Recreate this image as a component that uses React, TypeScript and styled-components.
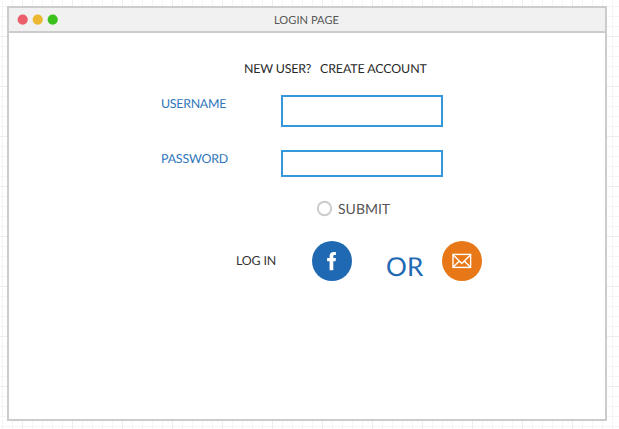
import React from "react";
import styled, { createGlobalStyle } from "styled-components";

const GlobalStyle = createGlobalStyle`
  * { box-sizing: border-box; }
  body {
    margin: 0;
    background: #fff;
    font-family: Lato, sans-serif;
    text-rendering: geometricPrecision;
    overflow: hidden;
  }
`;

const Canvas = styled.main`
  width: 619px;
  height: 429px;
  padding: 6px 0 0 7px;
  background-image:
    linear-gradient(90deg, #ededed 1px, transparent 1px),
    linear-gradient(#ededed 1px, transparent 1px),
    linear-gradient(90deg, #f5f5f5 1px, transparent 1px),
    linear-gradient(#f5f5f5 1px, transparent 1px);
  background-size: 50px 50px, 50px 50px, 10px 10px, 10px 10px;
  background-position: 22px 0, 0 36px, 2px 0, 0 6px;
`;

const Window = styled.section`
  width: 600px;
  height: 415px;
  border: 2px solid #ccc;
  background: #fff;
`;

const TitleBar = styled.header`
  display: grid;
  grid-template-columns: 1fr auto 1fr;
  align-items: center;
  height: 25px;
  padding-left: 8px;
  padding-right: 9px;
  background: #f1f1f1;
  border-bottom: 2px solid #ccc;
`;

const Controls = styled.svg`
  display: block;
`;

const Text = styled.span<{
  $size: number;
  $color: string;
  $width: number;
  $spacing?: number;
}>`
  display: block;
  width: ${(p) => p.$width}px;
  font-size: ${(p) => p.$size}px;
  letter-spacing: ${(p) => p.$spacing ?? 0}px;
  line-height: 1.2;
  color: ${(p) => p.$color};
  white-space: pre;
`;

const TitleText = styled(Text)`
  padding-top: 2px;
`;

const Form = styled.form`
  display: flex;
  flex-direction: column;
`;

const Intro = styled.div`
  display: flex;
  gap: 9px;
  padding: 29px 0 0 235px;
  height: 62px;
`;

const Field = styled.label<{ $height: number }>`
  display: grid;
  grid-template-columns: 120px 162px;
  align-items: start;
  height: ${(p) => p.$height}px;
  padding-left: 152px;
`;

const Input = styled.input<{ $height: number }>`
  width: 162px;
  height: ${(p) => p.$height}px;
  border: 2px solid #3498db;
  border-radius: 0;
  background: #fff;
  outline: none;
`;

const Submit = styled.div`
  display: flex;
  align-items: center;
  gap: 5px;
  height: 17px;
  margin-left: 307px;
`;

const SubmitText = styled(Text)`
  padding-top: 1px;
`;

const LoginRow = styled.div`
  display: grid;
  grid-template-columns: 75px 75px 55px 41px;
  align-items: center;
  height: 41px;
  margin: 21px 0 0 227px;
`;

const Round = styled.svg`
  display: block;
  width: 41px;
  height: 41px;
`;

const OrText = styled(Text)`
  padding-top: 13px;
`;

const LabelText = styled(Text)`
  padding-top: 2px;
`;

const LoginText = styled(Text)`
  padding-top: 2px;
`;

export default function App() {
  return (
    <>
      <GlobalStyle />
      <Canvas>
        <Window>
          <TitleBar>
            <Controls width="45" height="12" viewBox="0 0 45 12">
              <circle cx="5.7" cy="5.6" r="5.1" fill="#eb5f6b" />
              <circle cx="20.7" cy="5.6" r="5.1" fill="#ecb731" />
              <circle cx="35.7" cy="5.6" r="5.1" fill="#3cc01c" />
            </Controls>
            <TitleText $size={11.1} $color="#555" $width={65} $spacing={0.04}>LOGIN PAGE</TitleText>
          </TitleBar>
          <Form>
            <Intro>
              <Text $size={12.4} $color="#282828" $width={67} $spacing={-0.18}>NEW USER?</Text>
              <Text $size={12.4} $color="#282828" $width={120} $spacing={-0.1}>CREATE ACCOUNT</Text>
            </Intro>
            <Field $height={55}>
              <LabelText $size={12.4} $color="#2e75ba" $width={100} $spacing={-0.28}>USERNAME</LabelText>
              <Input $height={32} aria-label="Username" />
            </Field>
            <Field $height={50}>
              <LabelText $size={12.4} $color="#2e75ba" $width={100} $spacing={-0.17}>PASSWORD</LabelText>
              <Input $height={27} type="password" aria-label="Password" />
            </Field>
            <Submit>
              <svg width="17" height="17" viewBox="0 0 17 17">
                <circle cx="8.5" cy="8.5" r="6.7" fill="#fff" stroke="#ccc" strokeWidth="2" />
              </svg>
              <SubmitText $size={14} $color="#555" $width={60}>SUBMIT</SubmitText>
            </Submit>
            <LoginRow>
              <LoginText $size={12.4} $color="#333" $width={60} $spacing={-0.17}>LOG IN</LoginText>
              <Round viewBox="0 0 41 41">
                <circle cx="21" cy="21" r="20" fill="#1f69b3" />
                <path
                  d="M18.6 30.3V21.3H16.1V18.1H18.6V16.2C18.6 13.3 20.2 12 22.7 12H24.9V15H23.6C22.6 15 22.3 15.5 22.3 16.4V18.1H24.9L24.6 21.3H22.3V30.3Z"
                  fill="#fff"
                />
              </Round>
              <OrText $size={26} $color="#1f69b3" $width={50} $spacing={0.1}>OR</OrText>
              <Round viewBox="0 0 41 41">
                <circle cx="21" cy="21" r="20" fill="#e87817" />
                <g fill="none" stroke="#fff" strokeWidth="1.4">
                  <rect x="12" y="14.4" width="17.6" height="13" />
                  <path d="M12 14.7L20.8 23.4L29.6 14.7M12.3 27.1L18.1 21.2M29.3 27.1L23.5 21.2" />
                </g>
              </Round>
            </LoginRow>
          </Form>
        </Window>
      </Canvas>
    </>
  );
}
